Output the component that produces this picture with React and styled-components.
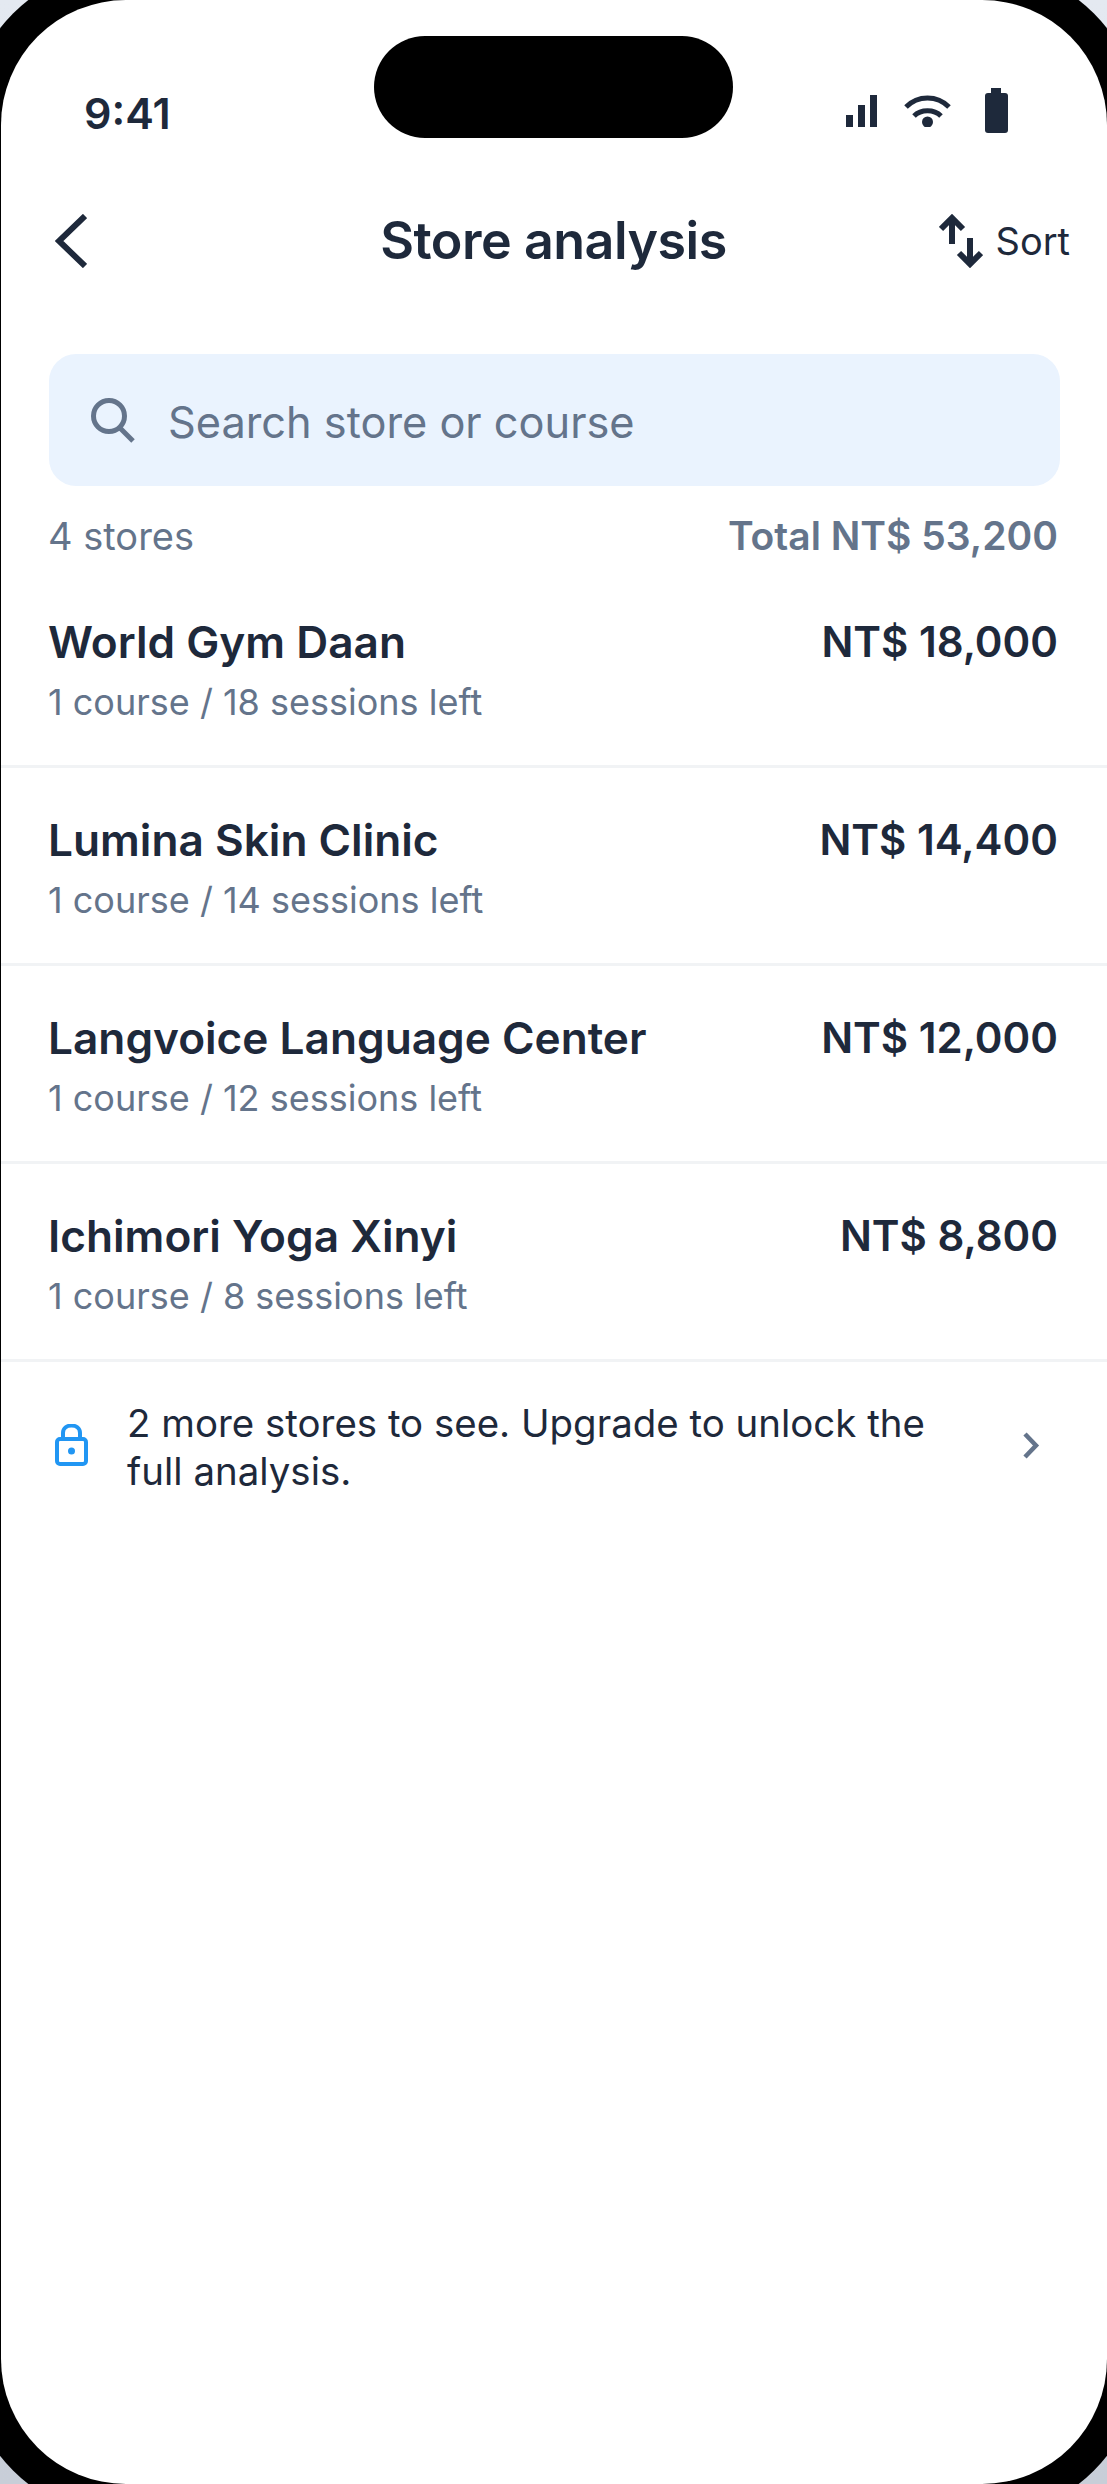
import React from "react";
import styled, { createGlobalStyle } from "styled-components";

const Global = createGlobalStyle`
  html, body { margin: 0; padding: 0; }
  body {
    font-family: Inter, "Liberation Sans", sans-serif;
  }
`;

const Backdrop = styled.div`
  width: 1107px;
  height: 2484px;
  overflow: hidden;
  background: linear-gradient(180deg, #e4e9f1 0%, #c8ced8 100%);
`;

// the bezel runs past the edge of the shot, only its corners and a hairline on the left show
const Phone = styled.div`
  width: 1173px;
  height: 2550px;
  box-sizing: border-box;
  margin: -33px;
  padding: 33px 33px 33px 34px;
  background: #000;
  border-radius: 158px;
`;

const Screen = styled.div`
  position: relative;
  width: 1106px;
  height: 2484px;
  background: #fff;
  border-radius: 125px;
  color: #1e293b;
`;

const Island = styled.div`
  position: absolute;
  top: 36px;
  left: 373px;
  width: 359px;
  height: 102px;
  border-radius: 51px;
  background: #000;
`;

const StatusBar = styled.div`
  height: 195px;
  box-sizing: border-box;
  padding: 88px 99px 0 83px;
  display: flex;
  justify-content: space-between;
  align-items: flex-start;
`;

const Time = styled.span`
  font-size: 43px;
  line-height: 50px;
  font-weight: 600;
`;

const StatusIcons = styled.div`
  display: flex;
  align-items: center;
  gap: 27px;
`;

const Header = styled.header`
  height: 90px;
  box-sizing: border-box;
  padding: 2px 37px 0 36px;
  display: grid;
  grid-template-columns: 1fr auto 1fr;
  align-items: center;
`;

const BackButton = styled.div`
  display: flex;
  padding-left: 18px;
`;

const Title = styled.h1`
  margin: 0;
  font-size: 52px;
  line-height: 60px;
  font-weight: 600;
  letter-spacing: -0.5px;
`;

const SortButton = styled.div`
  justify-self: end;
  display: flex;
  align-items: center;
  gap: 13px;
  font-size: 38px;
`;

const SearchBox = styled.div`
  margin: 69px 47px 0 48px;
  height: 132px;
  border-radius: 27px;
  background: #eaf3fe;
  display: flex;
  align-items: center;
  padding-left: 42px;
  gap: 33px;
  font-size: 43.3px;
  color: #64748b;
`;

const SearchLabel = styled.span`
  padding-top: 3px;
`;

const Summary = styled.div`
  margin: 26px 49px 0 47px;
  display: flex;
  justify-content: space-between;
  align-items: center;
  line-height: 48px;
  font-size: 38px;
  color: #64748b;
`;

const Total = styled.span`
  font-size: 39px;
  font-weight: 600;
`;

const List = styled.div`
  margin-top: 10px;
`;

const Row = styled.div`
  height: 198px;
  box-sizing: border-box;
  padding: 42px 49px 0 47px;
  border-bottom: 3px solid #f1f3f5;
  display: flex;
  justify-content: space-between;
  align-items: flex-start;
`;

const StoreName = styled.div`
  font-size: 44.2px;
  line-height: 60px;
  font-weight: 600;
`;

const StoreMeta = styled.div`
  margin-top: 5px;
  font-size: 36px;
  line-height: 50px;
  color: #64748b;
`;

const Amount = styled.div`
  font-size: 42px;
  line-height: 60px;
  font-weight: 600;
`;

const Upsell = styled.div`
  padding: 37px 67px 0 54px;
  display: flex;
  align-items: center;
`;

const LockSlot = styled.div`
  display: flex;
  margin-bottom: 4px;
`;

const ChevronSlot = styled.div`
  display: flex;
  margin-bottom: 3px;
`;

const UpsellText = styled.div`
  margin: 0 auto 0 39px;
  width: 850px;
  font-size: 38.45px;
  line-height: 48px;
`;

const rows = [
  { name: "World Gym Daan", meta: "1 course / 18 sessions left", amount: "NT$ 18,000" },
  { name: "Lumina Skin Clinic", meta: "1 course / 14 sessions left", amount: "NT$ 14,400" },
  { name: "Langvoice Language Center", meta: "1 course / 12 sessions left", amount: "NT$ 12,000" },
  { name: "Ichimori Yoga Xinyi", meta: "1 course / 8 sessions left", amount: "NT$ 8,800" },
];

const SignalIcon = () => (
  <svg width="31" height="32" viewBox="0 0 31 32" fill="#1e293b">
    <rect x="0" y="20" width="7" height="12" />
    <rect x="12" y="10" width="7" height="22" />
    <rect x="24" y="0" width="7" height="32" />
  </svg>
);

const WifiIcon = () => (
  <svg width="54" height="33" viewBox="0 0 54 33" fill="none" stroke="#1e293b" strokeWidth="5">
    <path d="M2 13 C14 1 33 1 45 13" />
    <path d="M10 22 C17 15 30 15 37 22" />
    <circle cx="23.5" cy="28" r="5.5" fill="#1e293b" stroke="none" />
  </svg>
);

const BatteryIcon = () => (
  <svg width="23" height="45" viewBox="0 0 23 45" fill="#1e293b">
    <rect x="6" y="0" width="10" height="7" />
    <rect x="0" y="5" width="23" height="40" rx="3" />
  </svg>
);

const BackIcon = () => (
  <svg width="32" height="54" viewBox="0 0 32 54" fill="none" stroke="#1e293b" strokeWidth="6">
    <path d="M30 2 L4 27 L30 52" />
  </svg>
);

const SortIcon = () => (
  <svg width="44" height="54" viewBox="0 0 44 54" fill="none" stroke="#1e293b" strokeWidth="6">
    <path d="M2 15 L13 4 L24 15 M13 4 V30" />
    <path d="M20 39 L31 50 L42 39 M31 50 V24" />
  </svg>
);

const SearchIcon = () => (
  <svg width="44" height="45" viewBox="0 0 44 45" fill="none" stroke="#64748b" strokeWidth="5">
    <circle cx="18" cy="18" r="15.5" />
    <path d="M28 29 L42 43" />
  </svg>
);

const LockIcon = () => (
  <svg width="33" height="42" viewBox="0 0 33 42" fill="none" stroke="#2196f3" strokeWidth="4">
    <rect x="2" y="15" width="29" height="25" rx="3" />
    <path d="M8 15 V9 C8 -1 25 -1 25 9 V15" />
    <circle cx="16.5" cy="27" r="3.5" fill="#2196f3" stroke="none" />
  </svg>
);

const ChevronIcon = () => (
  <svg width="18" height="27" viewBox="0 0 18 27" fill="none" stroke="#64748b" strokeWidth="4.5">
    <path d="M3 2 L14 13.5 L3 25" />
  </svg>
);

export default function App() {
  return (
    <Backdrop>
      <Global />
      <Phone>
        <Screen>
          <Island />
          <StatusBar>
            <Time>9:41</Time>
            <StatusIcons>
              <SignalIcon />
              <WifiIcon />
              <BatteryIcon />
            </StatusIcons>
          </StatusBar>
          <Header>
            <BackButton>
              <BackIcon />
            </BackButton>
            <Title>Store analysis</Title>
            <SortButton>
              <SortIcon />
              Sort
            </SortButton>
          </Header>
          <SearchBox>
            <SearchIcon />
            <SearchLabel>Search store or course</SearchLabel>
          </SearchBox>
          <Summary>
            <span>4 stores</span>
            <Total>Total NT$ 53,200</Total>
          </Summary>
          <List>
            {rows.map((r) => (
              <Row key={r.name}>
                <div>
                  <StoreName>{r.name}</StoreName>
                  <StoreMeta>{r.meta}</StoreMeta>
                </div>
                <Amount>{r.amount}</Amount>
              </Row>
            ))}
          </List>
          <Upsell>
            <LockSlot>
              <LockIcon />
            </LockSlot>
            <UpsellText>2 more stores to see. Upgrade to unlock the full analysis.</UpsellText>
            <ChevronSlot>
              <ChevronIcon />
            </ChevronSlot>
          </Upsell>
        </Screen>
      </Phone>
    </Backdrop>
  );
}
